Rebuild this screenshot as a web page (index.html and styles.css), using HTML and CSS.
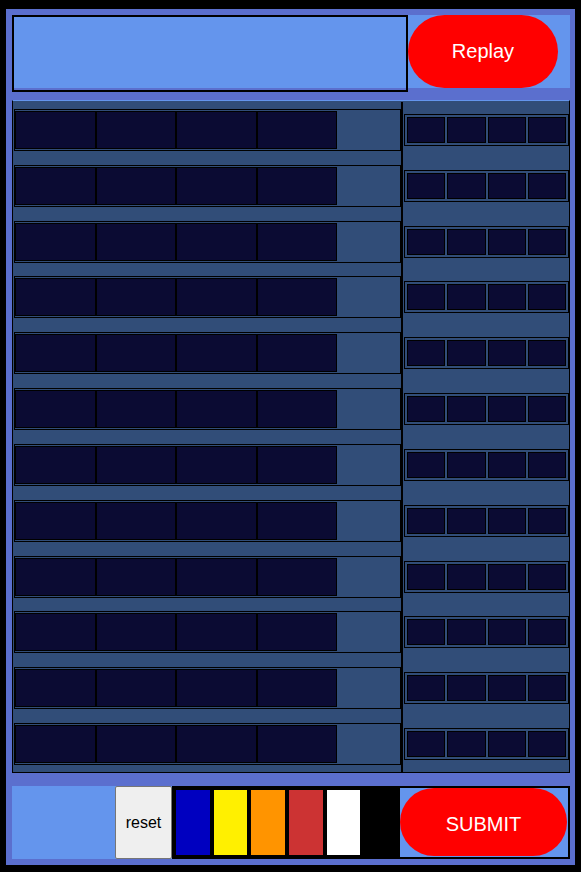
FILE: index.html
```html
<!DOCTYPE html>
<html lang="en">
<head>
    <meta charset="UTF-8">
    <meta name="viewport" content="width=device-width, initial-scale=1.0">
    <title>Mastermind</title>
    <link rel="stylesheet" href="styles.css">
</head>
<body>
    <div id="game">
        <div class="top-bar">
            <div class="message"></div>
            <button class="replay">Replay</button>
        </div>

        <div class="board">
            <div class="guesses">
                <div class="guess-row"><div class="peg"></div><div class="peg"></div><div class="peg"></div><div class="peg"></div></div>
                <div class="guess-row"><div class="peg"></div><div class="peg"></div><div class="peg"></div><div class="peg"></div></div>
                <div class="guess-row"><div class="peg"></div><div class="peg"></div><div class="peg"></div><div class="peg"></div></div>
                <div class="guess-row"><div class="peg"></div><div class="peg"></div><div class="peg"></div><div class="peg"></div></div>
                <div class="guess-row"><div class="peg"></div><div class="peg"></div><div class="peg"></div><div class="peg"></div></div>
                <div class="guess-row"><div class="peg"></div><div class="peg"></div><div class="peg"></div><div class="peg"></div></div>
                <div class="guess-row"><div class="peg"></div><div class="peg"></div><div class="peg"></div><div class="peg"></div></div>
                <div class="guess-row"><div class="peg"></div><div class="peg"></div><div class="peg"></div><div class="peg"></div></div>
                <div class="guess-row"><div class="peg"></div><div class="peg"></div><div class="peg"></div><div class="peg"></div></div>
                <div class="guess-row"><div class="peg"></div><div class="peg"></div><div class="peg"></div><div class="peg"></div></div>
                <div class="guess-row"><div class="peg"></div><div class="peg"></div><div class="peg"></div><div class="peg"></div></div>
                <div class="guess-row"><div class="peg"></div><div class="peg"></div><div class="peg"></div><div class="peg"></div></div>
            </div>
            <div class="hints">
                <div class="hint-row"><div class="hint"></div><div class="hint"></div><div class="hint"></div><div class="hint"></div></div>
                <div class="hint-row"><div class="hint"></div><div class="hint"></div><div class="hint"></div><div class="hint"></div></div>
                <div class="hint-row"><div class="hint"></div><div class="hint"></div><div class="hint"></div><div class="hint"></div></div>
                <div class="hint-row"><div class="hint"></div><div class="hint"></div><div class="hint"></div><div class="hint"></div></div>
                <div class="hint-row"><div class="hint"></div><div class="hint"></div><div class="hint"></div><div class="hint"></div></div>
                <div class="hint-row"><div class="hint"></div><div class="hint"></div><div class="hint"></div><div class="hint"></div></div>
                <div class="hint-row"><div class="hint"></div><div class="hint"></div><div class="hint"></div><div class="hint"></div></div>
                <div class="hint-row"><div class="hint"></div><div class="hint"></div><div class="hint"></div><div class="hint"></div></div>
                <div class="hint-row"><div class="hint"></div><div class="hint"></div><div class="hint"></div><div class="hint"></div></div>
                <div class="hint-row"><div class="hint"></div><div class="hint"></div><div class="hint"></div><div class="hint"></div></div>
                <div class="hint-row"><div class="hint"></div><div class="hint"></div><div class="hint"></div><div class="hint"></div></div>
                <div class="hint-row"><div class="hint"></div><div class="hint"></div><div class="hint"></div><div class="hint"></div></div>
            </div>
        </div>

        <div class="controls">
            <button class="reset">reset</button>
            <div class="palette">
                <div class="swatch blue"></div>
                <div class="swatch yellow"></div>
                <div class="swatch orange"></div>
                <div class="swatch red"></div>
                <div class="swatch white"></div>
                <div class="swatch black"></div>
                <div class="submit-wrap">
                    <button class="submit">SUBMIT</button>
                </div>
            </div>
        </div>
    </div>
</body>
</html>
```

FILE: styles.css
```css
body {
    margin: 0;
    background-color: #000;
    font-family: "Liberation Sans", Arial, sans-serif;
}
#game {
    width: 558px;
    margin: 9px 0 0 6px;
    padding: 6px 5px 6px 6px;
    background-color: #5b6fce;
}
.top-bar {
    display: flex;
    height: 73px;
    background-color: #6495ed;
}
.message {
    box-sizing: content-box;
    width: 392px;
    height: 100%;
    border: 2px solid #000;
}
.replay {
    width: 150px;
    height: 73px;
    border: none;
    border-radius: 37px;
    background-color: #ff0000;
    color: #fff;
    font-family: inherit;
    font-size: 20px;
}
.board {
    display: flex;
    height: 670px;
    margin-top: 12px;
    padding-top: 1px;
    border: 1px solid #000;
    border-top-color: #6495ed;
    background-color: #314d78;
}
.guesses {
    width: 388px;
    display: flex;
    flex-direction: column;
    justify-content: space-around;
    border-right: 2px solid #000;
}
.guess-row {
    box-sizing: border-box;
    display: flex;
    height: 42px;
    margin-left: 1px;
    padding-top: 1px;
    border: 1px solid #000;
}
.peg {
    box-sizing: border-box;
    width: 80.5px;
    height: 38px;
    border: 1px solid #000;
    background-color: #0b0b33;
}
.hints {
    flex: 1;
    display: flex;
    flex-direction: column;
    justify-content: space-around;
}
.hint-row {
    box-sizing: border-box;
    display: flex;
    gap: 2px;
    height: 32px;
    margin-left: 1px;
    padding: 2px;
    border: 1px solid #000;
}
.hint {
    flex: 1;
    border: 1px solid #000;
    background-color: #0b0b33;
}
.controls {
    display: flex;
    justify-content: flex-end;
    height: 73px;
    margin-top: 13px;
    background-color: #6495ed;
}
.reset {
    width: 57px;
    height: 73px;
    border: 1px solid #767676;
    border-radius: 2px;
    background-color: #efefef;
    color: #000;
    font-family: inherit;
    font-size: 16px;
    padding: 0;
}
.palette {
    display: flex;
    width: 394px;
    border: 2px solid #000;
    background-color: #000;
}
.swatch {
    box-sizing: border-box;
    width: 37.66px;
    border: 2px solid #000;
}
.blue { background-color: #0000c0; }
.yellow { background-color: #fff000; }
.orange { background-color: #ff9400; }
.red { background-color: #cc3333; }
.white { background-color: #fff; }
.black { background-color: #000; }
.submit-wrap {
    flex: 1;
    display: flex;
    background-color: #6495ed;
}
.submit {
    flex: 1;
    margin: 0 1px 1px 0;
    padding: 4px 0 0;
    border: none;
    border-radius: 34px;
    background-color: #ff0000;
    color: #fff;
    font-family: inherit;
    font-size: 20px;
}
```
